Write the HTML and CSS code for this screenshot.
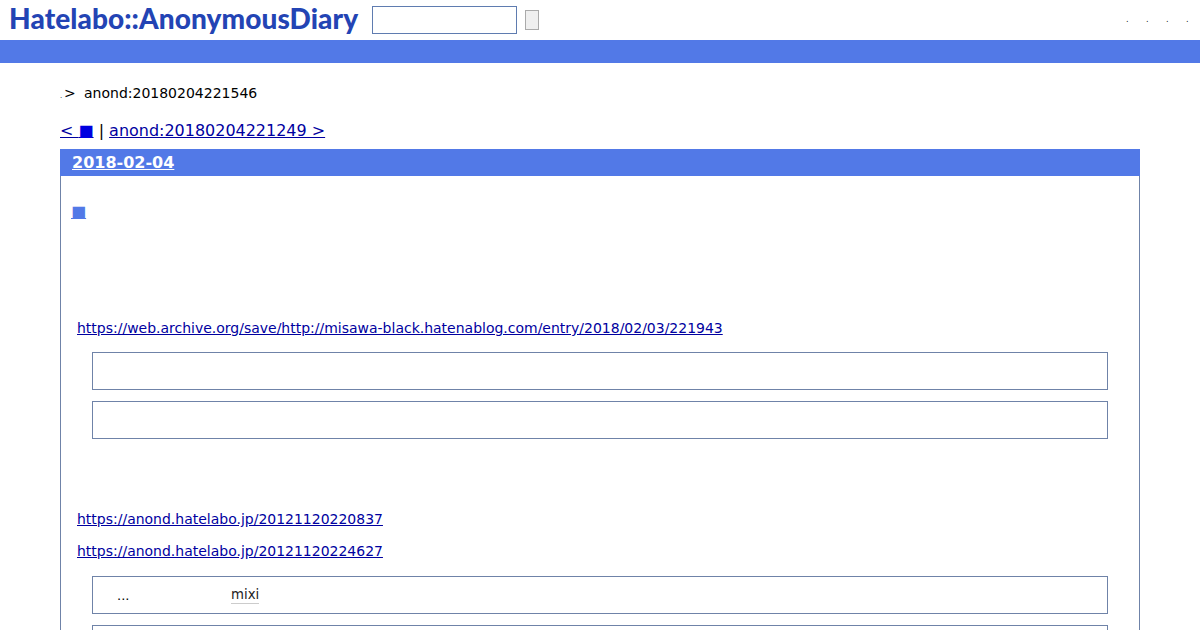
FILE: index.html
```html
<!DOCTYPE html>
<html lang="ja">
<head>
<meta charset="utf-8">
<title>anond:20180204221546</title>
<link rel="stylesheet" href="styles.css">
</head>
<body>
<header class="top">
  <a class="logo" href="#">Hatelabo::AnonymousDiary</a>
  <form class="search">
    <input class="search-input" type="text">
    <button class="search-btn" type="button"></button>
  </form>
  <nav class="top-links"><a href="#">.</a><a href="#">.</a><a href="#">.</a><a href="#">.</a></nav>
</header>
<div class="band"></div>
<main class="content">
  <p class="crumb"><a class="crumb-home" href="#">.</a><span class="crumb-gt">&gt;</span><span>anond:20180204221546</span></p>
  <p class="pager"><a href="#">&lt; <span class="sq">■</span></a> | <a href="#">anond:20180204221249 &gt;</a></p>
  <section class="day">
    <h2 class="day-head"><a href="#">2018-02-04</a></h2>
    <div class="day-body">
      <h3 class="entry-title"><a href="#">■</a></h3>
      <p class="para link-a"><a href="#">https://web.archive.org/save/http://misawa-black.hatenablog.com/entry/2018/02/03/221943</a></p>
      <blockquote class="quote q-first"></blockquote>
      <blockquote class="quote"></blockquote>
      <p class="para link-b"><a href="#">https://anond.hatelabo.jp/20121120220837</a></p>
      <p class="para link-c"><a href="#">https://anond.hatelabo.jp/20121120224627</a></p>
      <blockquote class="quote q-text"><span class="dots">...</span><a class="mixi" href="#">mixi</a></blockquote>
      <blockquote class="quote"></blockquote>
    </div>
  </section>
</main>
</body>
</html>
```
FILE: styles.css
```css
html, body { margin: 0; padding: 0; height: 630px; overflow: hidden; background: #fff; }
body { font-family: "DejaVu Sans", sans-serif; color: #000; font-size: 14px; }
a { color: #0000a0; }
p { margin: 0; }

.top { height: 40px; display: flex; align-items: flex-start; position: relative; }
.logo { margin: 1px 0 0 9px; width: 351px; font-family: "Lato", sans-serif; font-weight: 900; font-size: 28px; line-height: 34px; letter-spacing: 0.09px; color: #2344b4; text-decoration: none; white-space: nowrap; }
.search { display: flex; align-items: center; margin: 6px 0 0 12px; height: 28px; }
.search-input { box-sizing: border-box; width: 145px; height: 28px; margin: 0; padding: 0; border: 1px solid #5f7cb0; background: #fff; }
.search-btn { box-sizing: border-box; width: 14px; height: 20px; margin: 0 0 0 8px; padding: 0; border: 1px solid #aaa; background: #efefef; }
.top-links { margin-left: auto; display: flex; gap: 16px; padding: 14px 10px 0 0; font-size: 8px; line-height: 12px; }
.top-links a { width: 4px; color: #111; text-decoration: none; }

.band { height: 23px; background: #5279e7; }

.content { padding: 0 60px; }
.crumb { display: flex; align-items: baseline; padding-top: 21px; height: 18px; line-height: 18px; font-size: 14px; }
.crumb-home { font-size: 7px; width: 4px; color: #111; text-decoration: none; }
.crumb-gt { width: 20px; }
.pager { margin-top: 19px; font-size: 15.97px; line-height: 20px; height: 20px; white-space: nowrap; }
.sq { color: #0000e0; }
.day { margin-top: 8px; border: 1px solid #6f83a8; border-top: 0; height: 600px; }
.day-head { margin: 0 -1px; height: 27px; background: #5279e7; font-size: 16px; line-height: 27px; font-weight: 700; padding-left: 12px; }
.day-head a { color: #fff; }
.day-body { padding: 0 31px 0 16px; }
.entry-title { margin: 26px 0 0 -6px; font-size: 16px; font-weight: 400; line-height: 20px; height: 20px; }
.entry-title a { color: #5279e7; }
.para { font-size: 13.99px; line-height: 18px; height: 18px; }
.link-a { margin-top: 97px; }
.link-b { margin-top: 71px; }
.link-c { margin-top: 14px; }
.quote { box-sizing: border-box; margin: 11px 0 0 15px; height: 38px; border: 1px solid #6f83a8; }
.q-first { margin-top: 15px; }
.q-text { margin-top: 16px; display: flex; align-items: center; font-size: 13.3px; padding-left: 24px; }
.dots { width: 114px; font-size: 13px; }
.mixi { color: #222; text-decoration: none; border-bottom: 1px solid #ccc; line-height: 17px; }
```
